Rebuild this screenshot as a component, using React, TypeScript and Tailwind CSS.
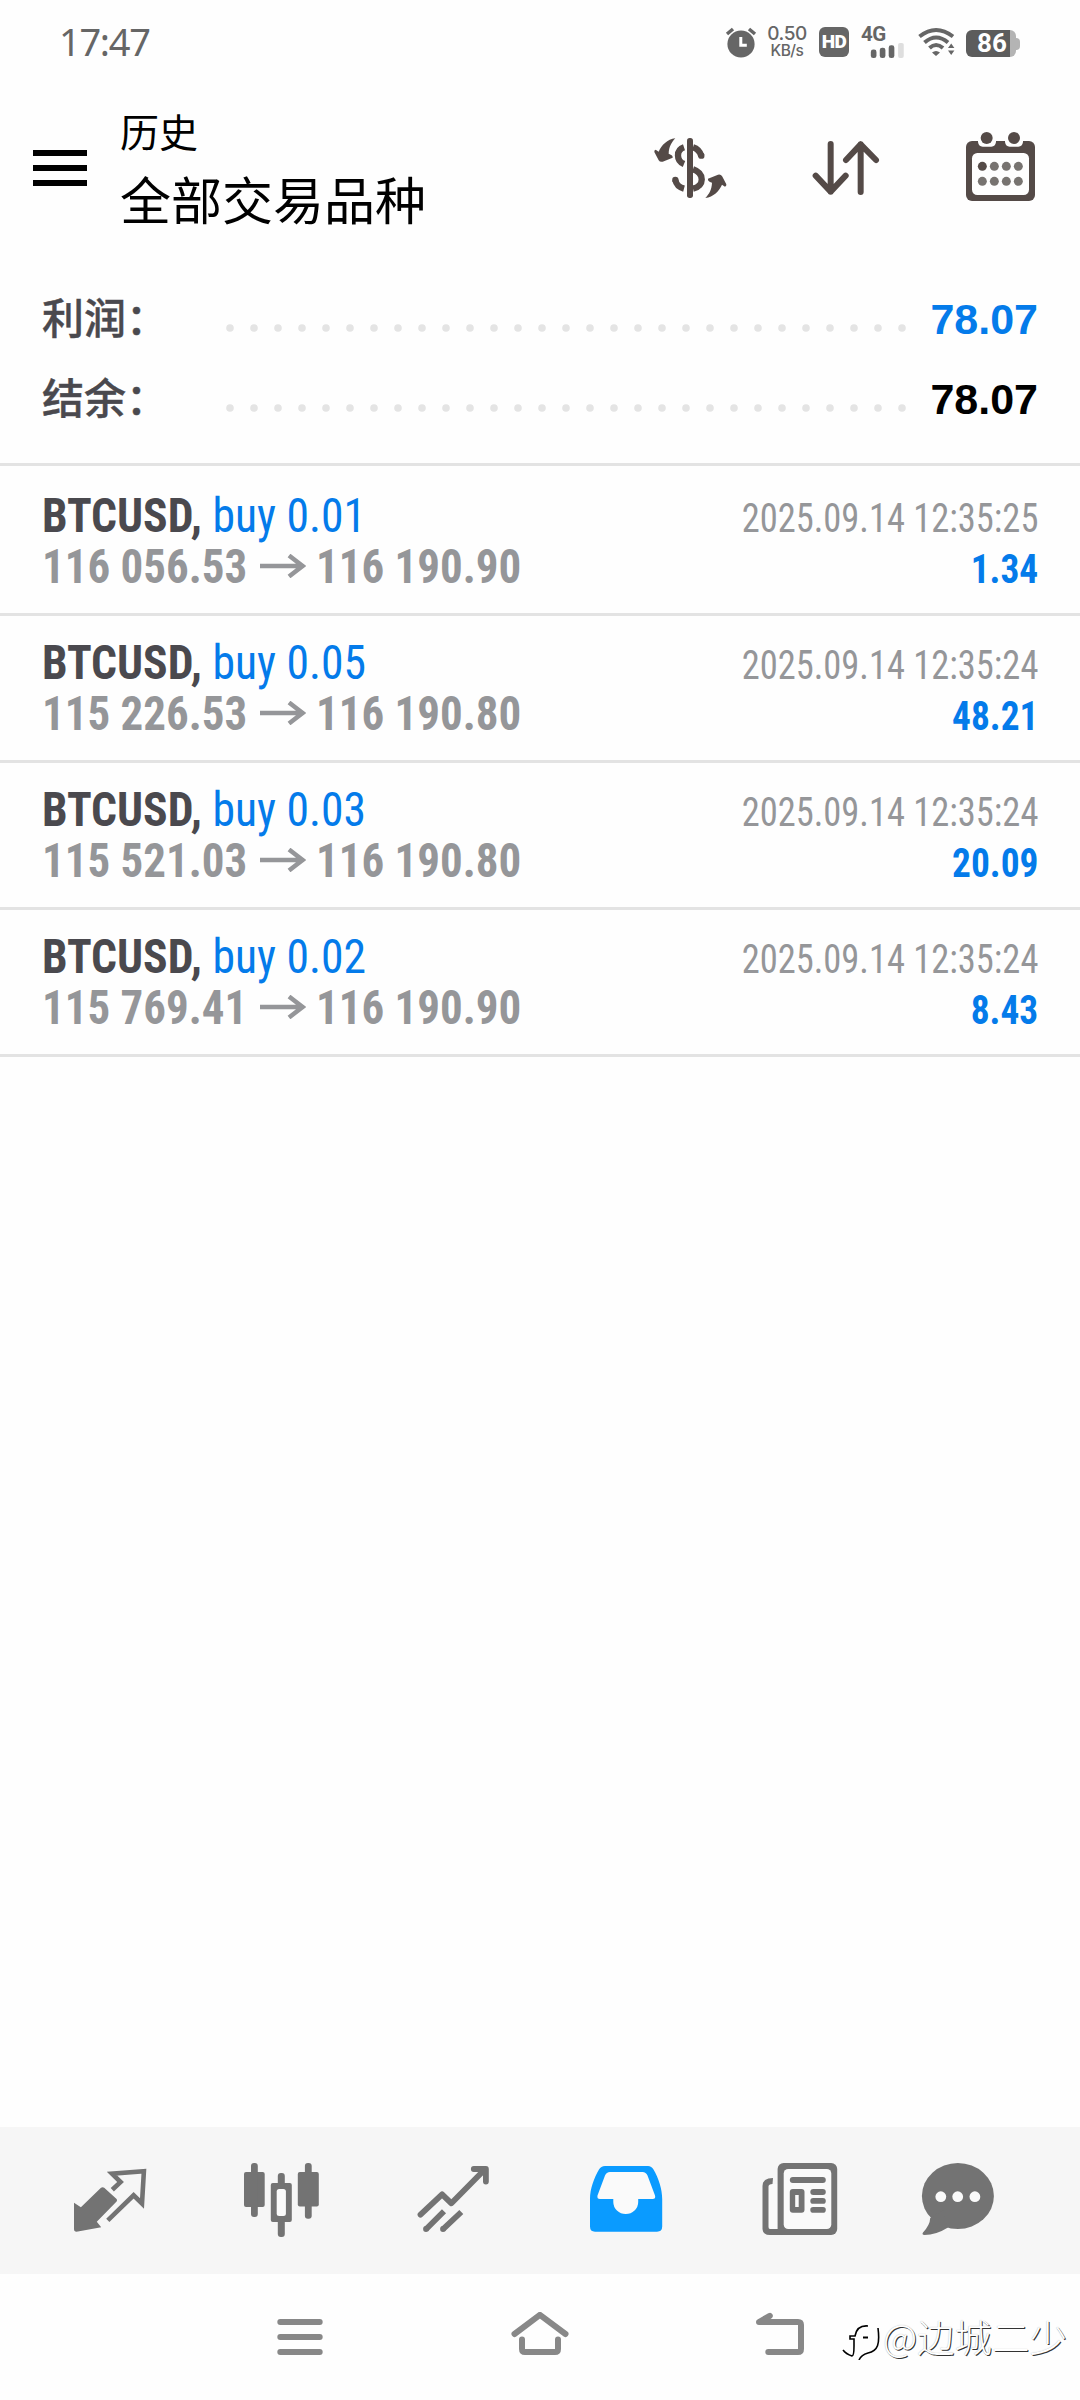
import React from 'react'

interface Deal {
  symbol: string
  side: string
  volume: string
  open: string
  close: string
  time: string
  profit: string
}

const deals: Deal[] = [
  { symbol: 'BTCUSD', side: 'buy', volume: '0.01', open: '116 056.53', close: '116 190.90', time: '2025.09.14 12:35:25', profit: '1.34' },
  { symbol: 'BTCUSD', side: 'buy', volume: '0.05', open: '115 226.53', close: '116 190.80', time: '2025.09.14 12:35:24', profit: '48.21' },
  { symbol: 'BTCUSD', side: 'buy', volume: '0.03', open: '115 521.03', close: '116 190.80', time: '2025.09.14 12:35:24', profit: '20.09' },
  { symbol: 'BTCUSD', side: 'buy', volume: '0.02', open: '115 769.41', close: '116 190.90', time: '2025.09.14 12:35:24', profit: '8.43' },
]

export default function App() {
  return (
    <div className="flex h-[2400px] w-[1080px] flex-col overflow-hidden bg-[#fefefe] font-['Roboto','Noto_Sans_CJK_SC',sans-serif]">
      <StatusBar />
      <Header />
      <section className="h-[198px] border-b-[3px] border-[#e3e3e3] pt-[11px]">
        <SummaryRow label="利润：" value="78.07" valueClass="text-[#047bea]" />
        <SummaryRow label="结余：" value="78.07" valueClass="text-black" />
      </section>
      <main className="flex-1 pt-[3px]">
        {deals.map((deal) => (
          <DealRow key={deal.open} deal={deal} />
        ))}
      </main>
      <TabBar />
      <SystemBar />
    </div>
  )
}

function StatusBar() {
  return (
    <div className="flex h-[84px] items-center pl-[59px] text-[#666]">
      <span className="w-[665px] pb-[2px] font-['Noto_Sans',sans-serif] text-[38px] leading-[82px] tracking-[-1.3px]">17:47</span>
      <svg width="34" height="34" viewBox="0 0 34 34" className="mr-[10px]">
        <circle cx="17" cy="19" r="13.6" fill="#666" />
        <path d="M3 9l6-5M31 9l-6-5" stroke="#666" strokeWidth="3.5" />
        <path d="M16.8 12v8.200h6" fill="none" stroke="#fff" strokeWidth="3" />
      </svg>
      <div className="flex w-[38px] flex-col items-center font-['Inter',sans-serif] font-medium tracking-[-0.5px]">
        <span className="text-[19px] leading-[16px]">0.50</span>
        <span className="pt-[2px] text-[15.500px] leading-[14px]">KB/s</span>
      </div>
      <div className="ml-[13px] flex h-[30px] w-[30px] items-center justify-center rounded-[6px] bg-[#666] font-['Roboto'] text-[19px] font-black tracking-[-0.5px] text-white">
        HD
      </div>
      <div className="ml-[12px] flex h-[32px] w-[46px] flex-col">
        <span className="font-['Roboto'] text-[20.500px] leading-[16px] font-bold tracking-[-0.5px]">4G</span>
        <svg width="46" height="17" viewBox="0 0 46 17">
          <rect x="9" y="8" width="6" height="9" rx="2.500" fill="#666" />
          <rect x="18.500" y="6" width="6" height="11" rx="2.500" fill="#666" />
          <rect x="28" y="3.500" width="6" height="13.500" rx="2.500" fill="#666" />
          <rect x="38" y="1" width="6" height="16" rx="2" fill="#dedede" />
        </svg>
      </div>
      <svg width="38" height="30" viewBox="0 0 38 30" className="ml-[11px]">
        <g fill="none" stroke="#666" strokeWidth="4">
          <path d="M1.500 9.500Q18 -3.500 35 9.500" />
          <path d="M6.500 15.500Q18 5.500 30 15.500" />
          <path d="M11.500 21Q18 15 25 21" />
        </g>
        <path d="M14 25.500q4-3 8 0l-4 3.500zM30 21l3.200-4.500 3.200 4.500zM30 23.500h6.400l-3.200 4.500z" fill="#666" />
      </svg>
      <div className="mt-[3px] ml-[10px] flex h-[27px] w-[50px] items-center justify-center rounded-[6px] bg-linear-to-r from-[#5c5c5c] from-88% to-[#b4b4b4] to-88% pl-[2px] font-['Roboto'] text-[26px] leading-[27px] font-bold text-white">
        86
      </div>
      <div className="mt-[3px] h-[12px] w-[4px] rounded-r-[4px] bg-[#b4b4b4]" />
    </div>
  )
}

function Header() {
  return (
    <header className="flex h-[184px] pl-[33px]">
      <div className="mt-[66px] flex w-[54px] flex-col gap-[9px]">
        <div className="h-[6px] bg-black" />
        <div className="h-[6px] bg-black" />
        <div className="h-[6px] bg-black" />
      </div>
      <div className="ml-[33px] flex w-[530px] flex-col text-black">
        <span className="mt-[22px] text-[39px] leading-[56px]">历史</span>
        <span className="mt-[6px] text-[51px] leading-[70px]">全部交易品种</span>
      </div>
      <div className="mt-[42px] grid h-[80px] grid-cols-[156px_154px_80px] text-[#544a47]">
        <svg width="80" height="80" viewBox="0 0 240 240">
          <rect x="111" y="36" width="18" height="180" rx="8" fill="currentColor" />
          <path d="M129 64Q148 70 154 90M102 64C78 72 78 104 102 114M129 130C164 142 164 180 129 188M76 162Q80 182 102 188" fill="none" stroke="currentColor" strokeWidth="19" />
          <circle cx="154" cy="89" r="9.500" fill="currentColor" />
          <circle cx="76" cy="162" r="9.500" fill="currentColor" />
          <DollarArrow />
          <g transform="rotate(180 121 126.500)">
            <DollarArrow />
          </g>
        </svg>
        <svg width="80" height="80" viewBox="0 0 240 240" fill="none" stroke="currentColor" strokeWidth="18" strokeLinecap="round" strokeLinejoin="round">
          <path d="M74 54V197M29 149L74 197L119 149" />
          <path d="M164 198V55M120 102L164 55L210 102" />
        </svg>
        <svg width="80" height="80" viewBox="0 0 240 240">
          <rect x="18" y="45" width="207" height="180" rx="18" fill="currentColor" />
          <rect x="36" y="81" width="171" height="126" rx="16" fill="#fefefe" />
          <path d="M54 40h54v8q-2 14-14 14H68Q56 62 54 48zM135 40h54v8q-2 14-14 14h-26q-12 0-14-14z" fill="#fefefe" />
          <circle cx="80" cy="36" r="18" fill="currentColor" />
          <circle cx="162" cy="36" r="18" fill="currentColor" />
          {[121, 166].map((y) =>
            [67, 103, 139, 175].map((x) => (
              <circle key={`${x}-${y}`} cx={x} cy={y} r="13.500" fill={x === 67 && y === 121 ? '#544a47' : '#777370'} />
            ))
          )}
        </svg>
      </div>
    </header>
  )
}

function DollarArrow() {
  return (
    <path
      d="M76 37C52 40 34 58 26 77L17 71Q12 72 13 78L26 103Q30 109 38 107L68 95Q70 88 56 83C57 62 64 50 76 37Z"
      fill="currentColor"
    />
  )
}

function SummaryRow({ label, value, valueClass }: { label: string; value: string; valueClass: string }) {
  return (
    <div className="flex h-[80px] items-center pr-[42px] pl-[42px]">
      <span className="w-[184px] shrink-0 pt-[2px] text-[42px] leading-[78px] font-medium text-[#4a494e] [-webkit-text-stroke:0.4px_#4a494e]">{label}</span>
      <svg width="680" height="8" viewBox="0 0 680 8" className="mt-[18px] shrink-0">
        {Array.from({ length: 29 }, (_, i) => (
          <circle key={i} cx={4 + i * 24} cy="4" r="3.800" fill="#e4e4e4" />
        ))}
      </svg>
      <span className={`flex-1 text-right font-['Liberation_Sans',sans-serif] text-[43px] leading-[80px] font-bold ${valueClass}`}>{value}</span>
    </div>
  )
}

function DealRow({ deal }: { deal: Deal }) {
  return (
    <div className="flex h-[147px] justify-between border-b-[3px] border-[#e3e3e3] pr-[42px] pl-[42px] font-['Roboto_Condensed','Roboto',sans-serif] font-stretch-condensed">
      <div className="flex flex-col pt-[21px] text-[48px] leading-[51px]">
        <div className="origin-left scale-x-[0.95] whitespace-pre">
          <span className="font-bold text-[#4a494e]">{deal.symbol}, </span>
          <span className="text-[#047bea]">{deal.side} {deal.volume}</span>
        </div>
        <div className="flex font-bold whitespace-nowrap text-[#959699]">
          <span className="w-[218px] origin-left scale-x-[0.937]">{deal.open}</span>
          <svg width="46" height="24" viewBox="0 0 46 24" className="mt-[13px] mr-[10px]">
            <path d="M0 12H43M29 1.500L42.500 12L29 22.500" fill="none" stroke="#959699" strokeWidth="4.500" />
          </svg>
          <span className="origin-left scale-x-[0.937]">{deal.close}</span>
        </div>
      </div>
      <div className="flex flex-col items-end pt-[24px] text-[40px] leading-[51px]">
        <span className="origin-right scale-x-[0.912] text-[#959699]">{deal.time}</span>
        <span className="origin-right scale-x-[0.935] font-bold text-[#047bea]">{deal.profit}</span>
      </div>
    </div>
  )
}

function TabBar() {
  return (
    <nav className="grid h-[147px] grid-cols-[171px_173px_172px_174px_158px_90px] bg-[#f6f6f6] pt-[28px] pl-[65px] text-[#737373]">
      {/* quotes */}
      <svg width="90" height="90" viewBox="0 0 90 90">
        <path d="M9 47.700L15.900 52.300L36 32.800Q37.600 31.500 39.200 32.800L51.600 44Q52.600 45.200 51.600 46.500L31.800 66.700L36.200 72.300L11.500 76.700Q9 76.700 9 74Z" fill="currentColor" />
        <path d="M47.300 34.800L55.600 27L47 18.600L78.900 16.200L77 48.500L68.600 40.300L42.800 65.300" fill="none" stroke="currentColor" strokeWidth="4.600" />
      </svg>
      {/* charts */}
      <svg width="90" height="90" viewBox="0 0 90 90" fill="currentColor">
        <rect x="8" y="17" width="20.700" height="35" rx="2" />
        <rect x="15" y="8" width="6.800" height="54" rx="3" />
        <rect x="34.800" y="28" width="21" height="39" rx="2" />
        <rect x="41.800" y="18" width="7" height="64" rx="3" />
        <rect x="40.700" y="34" width="9.200" height="27" rx="2.500" fill="#fafafa" />
        <rect x="61.800" y="17" width="21" height="34.500" rx="2" />
        <rect x="68.900" y="8" width="6.800" height="55.700" rx="3" />
      </svg>
      {/* trade */}
      <svg width="90" height="90" viewBox="0 0 90 90" fill="none" stroke="currentColor" strokeWidth="5.800" strokeLinejoin="round">
        <path d="M11.500 59.700L33.100 39.300L42.400 48.300L76.200 14M64.800 14H76.900V26.500" strokeLinecap="round" />
        <path d="M35 56.300L17 74.300M52.300 57L33.800 74.300" />
        <circle cx="17" cy="74" r="2.900" fill="currentColor" stroke="none" />
        <circle cx="34" cy="74" r="2.900" fill="currentColor" stroke="none" />
      </svg>
      {/* history */}
      <svg width="90" height="90" viewBox="0 0 90 90">
        <path d="M9 44C9 34 13 23 18 14.500Q20 11 24 11H67Q70.500 11 72.500 14.500C77.500 23 81.200 34 81.200 44V71.500Q81.200 76.700 76 76.700H14Q9 76.700 9 71.500Z" fill="#0a9bff" />
        <path d="M29 17Q25.500 17 24 20.500L16.500 40.500Q15.800 44 19 44H32.300V47A12.400 12 0 0 0 57.200 47V44H71.500Q75 44 74 40.500L66.500 20.500Q65 17 61.500 17Z" fill="#fafafa" />
      </svg>
      {/* news */}
      <svg width="90" height="90" viewBox="0 0 90 90" fill="currentColor">
        <rect x="13" y="29" width="11" height="46" fill="#fafafa" />
        <path d="M18 23Q7.500 23 7.500 31V74Q8 80 15 80H28V74H15Q13.500 74 13.500 72V31.500Q13.500 29 17.500 29Z" />
        <rect x="22.600" y="8" width="59.600" height="72" rx="6" />
        <rect x="28.700" y="14" width="47.600" height="60" rx="4.500" fill="#fafafa" />
        <rect x="34.800" y="22" width="36" height="6" rx="3" />
        <rect x="34.800" y="34" width="14.700" height="23.700" rx="3" />
        <rect x="40.200" y="40" width="3.500" height="12" fill="#fafafa" />
        <rect x="55.300" y="34" width="15.500" height="6" rx="3" />
        <rect x="55.300" y="43" width="15.500" height="5.800" rx="2.900" />
        <rect x="55.300" y="52" width="15.500" height="5.700" rx="2.800" />
      </svg>
      {/* messages */}
      <svg width="90" height="90" viewBox="0 0 90 90">
        <ellipse cx="44.900" cy="41" rx="36" ry="33" fill="currentColor" />
        <path d="M17.200 63Q17 70 10 77.500Q8.500 79.500 11.500 80Q23 80 35 72.500L30 55Z" fill="currentColor" />
        <circle cx="27.800" cy="41.700" r="5.400" fill="#fafafa" />
        <circle cx="44.700" cy="41.700" r="5.400" fill="#fafafa" />
        <circle cx="61.900" cy="41.700" r="5.400" fill="#fafafa" />
      </svg>
    </nav>
  )
}

function SystemBar() {
  return (
    <footer className="flex h-[126px] items-start pt-[38px] pl-[270px]">
      <svg width="60" height="50" viewBox="0 0 60 50" fill="none" stroke="#888" strokeWidth="6" strokeLinecap="round">
        <path d="M10.300 10H49.700M10.300 25H49.700M10.300 40H49.700" />
      </svg>
      <svg width="60" height="50" viewBox="0 0 60 50" fill="none" stroke="#888" strokeWidth="6" strokeLinecap="round" strokeLinejoin="round" className="ml-[180px]">
        <path d="M4.500 22L29.900 2.800L55.500 22M12 27.500V37Q12 40 15 40H45Q48 40 48 37V27.500" />
      </svg>
      <svg width="60" height="50" viewBox="0 0 60 50" fill="none" stroke="#888" strokeWidth="6" strokeLinecap="round" strokeLinejoin="round" className="ml-[180px]">
        <path d="M18.300 40H48Q51 40 51 37V13Q51 10 48 10H9L19.800 3.800" />
      </svg>
      <div className="ml-[32px] flex items-center">
        <svg width="40" height="44" viewBox="0 0 40 44" fill="none" stroke="#000" className="mt-[4px]">
          <path d="M1 34Q4 38 10 40Q12 40 12 30V23H8V20H13Q15 9 26 10M36 12C38 28 36 35 26 37Q19 39 17 44" strokeWidth="1.600" />
          <path d="M21 21.500H26" strokeWidth="2" />
        </svg>
        <span className="ml-[1px] font-['Noto_Sans_CJK_SC',sans-serif] text-[37.500px] leading-[48px] font-light whitespace-nowrap text-white [text-shadow:1px_1px_0px_#333,0px_0px_1px_#aaa]">@边城二少</span>
      </div>
    </footer>
  )
}
